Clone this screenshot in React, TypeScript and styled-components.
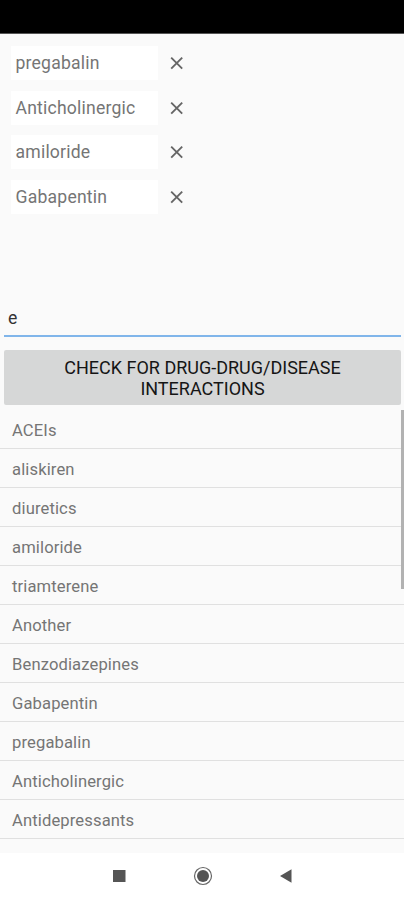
import React from "react";
import styled, { createGlobalStyle } from "styled-components";

const GlobalStyle = createGlobalStyle`
  * { box-sizing: border-box; }
  body { margin: 0; background: #fafafa; font-family: Roboto, sans-serif; }
`;

const Screen = styled.div`
  width: 404px;
  height: 900px;
  display: flex;
  flex-direction: column;
  overflow: hidden;
  background: #fafafa;
`;

const StatusBar = styled.div`
  flex: none;
  height: 34px;
  background: #000;
  border-bottom: 1px solid #555;
`;

const Selected = styled.div`
  flex: none;
  height: 264px;
  padding: 12px 0 0 11px;
  display: flex;
  flex-direction: column;
  gap: 10.7px;
`;

const SelectedRow = styled.div`
  display: flex;
  align-items: center;
  height: 34px;
`;

const SelectedName = styled.div`
  width: 147px;
  height: 34px;
  padding-left: 4.5px;
  line-height: 34px;
  background: #fff;
  color: #757575;
  font-size: 17.6px;
  letter-spacing: 0.2px;
`;

const RemoveButton = styled.button`
  margin-left: 12px;
  width: 14px;
  height: 14px;
  padding: 0;
  border: 0;
  background: none;
  display: flex;
`;

const SearchInput = styled.input`
  flex: none;
  margin: 0 3px 0 4px;
  height: 39px;
  padding: 2px 4px 0 4px;
  border: 0;
  border-bottom: 2px solid #80b5ea;
  border-radius: 0;
  outline: 0;
  background: none;
  color: #333;
  font: 17.6px Roboto, sans-serif;
`;

const CheckButton = styled.button`
  flex: none;
  margin: 13px 3px 4px 4px;
  height: 55px;
  padding: 1px 40px 0;
  border: 0;
  border-radius: 2px;
  background: #d6d7d7;
  color: #151515;
  font: 18px/21px Roboto, sans-serif;
  text-transform: uppercase;
`;

const Results = styled.div`
  position: relative;
  flex: 1;
  min-height: 0;
  padding-top: 0.8px;
  overflow: hidden;
`;

const ResultRow = styled.div`
  height: 39px;
  padding-left: 12px;
  line-height: 41px;
  border-bottom: 1px solid #e0e0e0;
  color: #757575;
  font-size: 16.6px;
  letter-spacing: 0.12px;
`;

const ScrollThumb = styled.div`
  position: absolute;
  top: 1px;
  right: 0;
  width: 3px;
  height: 179px;
  background: #b2b2b2;
`;

const NavBar = styled.nav`
  flex: none;
  height: 47px;
  padding: 13px 0 0 1px;
  display: flex;
  justify-content: center;
  gap: 64px;
  background: #fff;
`;

const selected = ["pregabalin", "Anticholinergic", "amiloride", "Gabapentin"];
const results = [
  "ACEIs", "aliskiren", "diuretics", "amiloride", "triamterene", "Another",
  "Benzodiazepines", "Gabapentin", "pregabalin", "Anticholinergic", "Antidepressants",
];

export default function App() {
  return (
    <Screen>
      <GlobalStyle />
      <StatusBar />
      <Selected>
        {selected.map((name) => (
          <SelectedRow key={name}>
            <SelectedName>{name}</SelectedName>
            <RemoveButton aria-label={`Remove ${name}`}>
              <svg width="14" height="14" viewBox="0 0 14 14">
                <path d="M1.2 1.7 12.2 12.7M12.2 1.7 1.2 12.7" stroke="#666" strokeWidth="1.9" />
              </svg>
            </RemoveButton>
          </SelectedRow>
        ))}
      </Selected>
      <SearchInput defaultValue="e" aria-label="Search" />
      <CheckButton>Check for drug-drug/disease interactions</CheckButton>
      <Results>
        {results.map((name) => (
          <ResultRow key={name}>{name}</ResultRow>
        ))}
        <ScrollThumb />
      </Results>
      <NavBar>
        <svg width="20" height="20" viewBox="0 0 20 20">
          <path d="M4 4h12.5v12H4z" fill="#555" />
        </svg>
        <svg width="20" height="20" viewBox="0 0 20 20">
          <circle cx="10" cy="10" r="8.5" fill="none" stroke="#666" strokeWidth="1.2" />
          <circle cx="10" cy="10" r="6" fill="#555" />
        </svg>
        <svg width="20" height="20" viewBox="0 0 20 20">
          <path d="M3 10 14.5 3.3v13.4z" fill="#555" />
        </svg>
      </NavBar>
    </Screen>
  );
}
